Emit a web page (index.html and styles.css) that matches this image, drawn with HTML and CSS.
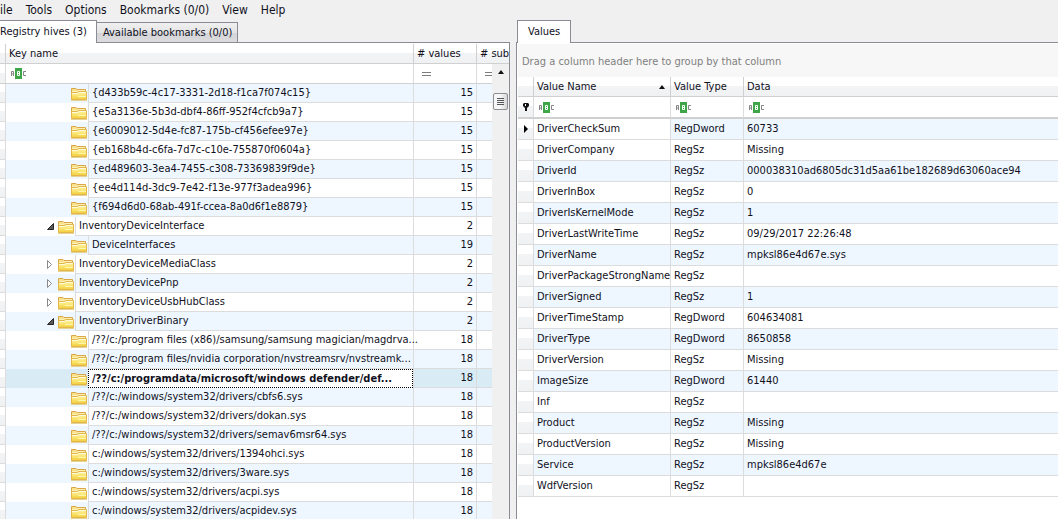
FILE: index.html
```html
<!DOCTYPE html>
<html lang="en">
  <head>
    <meta charset="UTF-8" />
    <meta name="viewport" content="width=device-width, initial-scale=1.0" />
    <title>Registry Explorer</title>
    <link rel="stylesheet" href="styles.css" />
  </head>
  <body>
    <!-- Menu bar -->
    <nav class="menu-bar">
      <button class="menu-item">ile</button>
      <button class="menu-item">Tools</button>
      <button class="menu-item">Options</button>
      <button class="menu-item">Bookmarks (0/0)</button>
      <button class="menu-item">View</button>
      <button class="menu-item">Help</button>
    </nav>

    <main class="workspace">
      <!-- Registry tree -->
      <section class="pane">
        <div class="tabs">
          <button class="tab active tab-flush">Registry hives (3)</button>
          <button class="tab">Available bookmarks (0/0)</button>
        </div>
        <div class="pane-body tree-body">
          <table class="grid tree">
            <colgroup>
              <col class="col-edge" />
              <col />
              <col class="col-values" />
              <col class="col-subkeys" />
            </colgroup>
            <thead>
              <tr>
                <th></th>
                <th>Key name</th>
                <th># values</th>
                <th># sub</th>
              </tr>
              <tr class="filter">
                <td></td>
                <td><svg class="abc"><use href="#icon-abc" /></svg></td>
                <td><svg class="equals"><use href="#icon-equals" /></svg></td>
                <td><svg class="equals"><use href="#icon-equals" /></svg></td>
              </tr>
            </thead>
            <tbody id="tree-rows"></tbody>
          </table>
          <div class="scrollbar">
            <span class="arrow-up"></span>
            <span class="thumb"><i></i><i></i><i></i><i></i></span>
          </div>
        </div>
      </section>

      <!-- Values of the selected key -->
      <section class="pane">
        <div class="tabs">
          <button class="tab active">Values</button>
        </div>
        <div class="pane-body values-body">
          <div class="group-panel">Drag a column header here to group by that column</div>
          <table class="grid values">
            <colgroup>
              <col class="col-indicator" />
              <col class="col-name" />
              <col class="col-type" />
              <col />
            </colgroup>
            <thead>
              <tr>
                <th></th>
                <th><div class="sorted">Value Name<span class="arrow-up"></span></div></th>
                <th>Value Type</th>
                <th>Data</th>
              </tr>
              <tr class="filter">
                <td class="indicator"><svg class="pin"><use href="#icon-pin" /></svg></td>
                <td><svg class="abc"><use href="#icon-abc" /></svg></td>
                <td><svg class="abc"><use href="#icon-abc" /></svg></td>
                <td><svg class="abc"><use href="#icon-abc" /></svg></td>
              </tr>
            </thead>
            <tbody id="value-rows"></tbody>
          </table>
        </div>
      </section>
    </main>

    <!-- Icons -->
    <svg class="icon-defs">
      <defs>
        <linearGradient id="folder-fill" x1="0" y1="0" x2="0" y2="1">
          <stop offset="0" stop-color="#fdf3a8" />
          <stop offset="0.5" stop-color="#fbe573" />
          <stop offset="1" stop-color="#f2cc3c" />
        </linearGradient>
        <symbol id="icon-folder" viewBox="0 0 16 14">
          <path d="M0.5 12V1.5H5L6 2.5H14.5V12Z" fill="#f9e08a" stroke="#d9a648" />
          <path d="M1 4.5H6L7 3.5H14" fill="none" stroke="#fdf0b4" />
          <path d="M0.5 5.5H6.5L7.5 4.5H15.5V12.5H0.5Z" fill="url(#folder-fill)" stroke="#e2b64a" />
          <path d="M1 6.5H7L8 5.5H15" fill="none" stroke="#fffbd8" />
          <path d="M7 9.5H15" fill="none" stroke="#fff6b0" />
          <path d="M0 13.5H16" stroke="#e6d294" />
        </symbol>
        <symbol id="icon-abc" viewBox="0 0 16 11">
          <rect x="4" y="0" width="7" height="11" fill="#3fa648" />
          <path d="M0.5 8V3.5H2.5V8M0.5 6H2.5" fill="none" stroke="#858585" />
          <path d="M6.5 3.5H8.5V7.5H6.5ZM6.5 5.5H8.5" fill="none" stroke="#fff" />
          <path d="M15 3.5H12.5V7.5H15" fill="none" stroke="#858585" />
        </symbol>
        <symbol id="icon-equals" viewBox="0 0 9 4">
          <path d="M0 0.5H9M0 3.5H9" stroke="#7c7c7c" />
        </symbol>
        <symbol id="icon-pin" viewBox="0 0 6 8">
          <path d="M1 0H5L6 1V3L4 5V8H2V5L0 3V1Z" fill="#111" />
          <rect x="2" y="1" width="1" height="2" fill="#fff" />
        </symbol>
        <symbol id="icon-current" viewBox="0 0 4 8">
          <path d="M0 0L4 4L0 8Z" fill="#000" />
        </symbol>
        <symbol id="icon-open" viewBox="0 0 7 7">
          <path d="M6.5 0.5V6.5H0.5Z" fill="#595959" stroke="#262626" />
        </symbol>
        <symbol id="icon-closed" viewBox="0 0 6 9">
          <path d="M0.5 0.5V8.5L4.5 4.5Z" fill="#fff" stroke="#8a8a8a" />
        </symbol>
      </defs>
    </svg>

    <script src="script.js"></script>
  </body>
</html>
```
FILE: styles.css
```css
/* Global Styles */
* {
  box-sizing: border-box;
}

body {
  display: flex;
  flex-direction: column;
  height: 100vh;
  margin: 0;
  overflow: hidden;
  background-color: #f0f0f0;
  color: #10101c;
  font-family: "DejaVu Sans Condensed", "DejaVu Sans", sans-serif;
  font-size: 11px;
  line-height: 16px;
}

button {
  margin: 0;
  border: none;
  background: none;
  color: inherit;
  font: inherit;
}

.icon-defs {
  position: absolute;
  width: 0;
  height: 0;
}

/* Menu Bar */
.menu-bar {
  display: flex;
  gap: 13px;
  height: 20px;
  font-size: 12px;
}

.menu-item {
  padding: 0;
  line-height: 18px;
}

/* Workspace */
.workspace {
  display: grid;
  grid-template-columns: 510fr 542fr;
  gap: 6px;
  flex: 1;
  min-height: 0;
}

.pane {
  display: flex;
  flex-direction: column;
  min-width: 0;
  min-height: 0;
}

/* Tabs */
.tabs {
  display: flex;
  align-items: flex-end;
  height: 22px;
  padding-left: 1px;
}

.tab {
  height: 20px;
  padding: 0 5px 0 6px;
  border: 1px solid #898c95;
  border-left: none;
  border-bottom: none;
  background: linear-gradient(#f0f0f0, #e4e4e6 50%, #d4d4d8 50%, #dcdcdf);
}

.tab.active {
  height: 23px;
  margin-bottom: -1px;
  padding: 0 10px;
  border-left: 1px solid #898c95;
  background: #fff;
  z-index: 1;
}

.tab.tab-flush {
  margin-left: -1px;
  padding: 0 9px 0 0;
  border-left: none;
}

.pane-body {
  flex: 1;
  min-height: 0;
  overflow: hidden;
  border-top: 1px solid #898c95;
  background-color: #fff;
}

.tree-body {
  position: relative;
  padding-top: 1px;
  border-right: 1px solid #898c95;
}

.values-body {
  border-left: 1px solid #898c95;
  padding: 1px 0 0 1px;
}

/* Grids */
.grid {
  width: 100%;
  table-layout: fixed;
  border-collapse: separate;
  border-spacing: 0;
}

.grid th,
.grid td {
  height: 19px;
  padding: 0 3px;
  border-right: 1px solid #dcdcdc;
  border-bottom: 1px solid #dcdcdc;
  font-weight: normal;
  text-align: left;
  white-space: nowrap;
}

.grid th {
  height: 20px;
  border-color: #d0d0d0;
  background: linear-gradient(#fff 45%, #f3f4f6 45%, #f0f1f3);
}

.grid th:last-child,
.grid td:last-child {
  border-right: none;
}

.grid .filter td {
  height: 20px;
  border-bottom-color: #d0d0d0;
}

.grid tbody tr:nth-child(odd) {
  background-color: #eef7ff;
}

.grid td:first-child {
  background: linear-gradient(#fff 45%, #f3f4f6 45%, #f0f1f3);
}

.grid svg {
  display: block;
}

.abc {
  width: 16px;
  height: 11px;
  margin-left: 2px;
}

.equals {
  width: 9px;
  height: 4px;
  margin-left: 5px;
}

.arrow-up {
  width: 0;
  border: 3px solid transparent;
  border-top: none;
  border-bottom: 4px solid #111;
}

/* Registry Tree */
.col-edge {
  width: 6px;
}

.col-values {
  width: 63px;
}

.col-subkeys {
  width: 32px;
}

.tree th {
  padding: 0 0 0 3px;
}

.grid.tree td:first-child {
  padding: 0;
}

.tree td.key {
  padding: 0;
  border-bottom: none;
}

.key-cell {
  display: flex;
  align-items: center;
  height: 19px;
}

.toggle {
  display: flex;
  align-items: center;
  justify-content: center;
  width: 16px;
  height: 18px;
  margin-left: 36px;
  padding: 0;
}

.toggle .open {
  width: 7px;
  height: 7px;
}

.toggle .closed {
  width: 6px;
  height: 9px;
}

.folder {
  flex: none;
  width: 16px;
  height: 14px;
}

.child .folder {
  margin-left: 65px;
}

.key-name {
  flex: 1;
  min-width: 0;
  height: 19px;
  margin-left: 1px;
  padding-left: 3px;
  border-left: 1px solid #dcdcdc;
  border-bottom: 1px solid #dcdcdc;
  line-height: 18px;
}

.tree td.count {
  text-align: right;
}

.grid.tree tbody tr.selected {
  background-color: #d9ecf6;
}

.selected .key-name {
  border: 1px dotted #000;
  background-color: #fff;
  font-weight: bold;
  line-height: 17px;
}

/* Scrollbar */
.scrollbar {
  position: absolute;
  top: 21px;
  right: 0;
  bottom: 0;
  display: flex;
  flex-direction: column;
  align-items: center;
  gap: 19px;
  width: 17px;
  padding-top: 6px;
  background-color: #f0f0f0;
}

.thumb {
  display: flex;
  flex-direction: column;
  align-items: center;
  justify-content: center;
  gap: 1px;
  width: 15px;
  height: 17px;
  border: 1px solid #8e8e94;
  border-radius: 2px;
  background: linear-gradient(90deg, #f6f6f6 50%, #d6d6d8);
}

.thumb i {
  width: 7px;
  height: 1px;
  background-color: #55565c;
}

/* Values Grid */
.col-indicator {
  width: 16px;
}

.col-name {
  width: 137px;
}

.col-type {
  width: 73px;
}

.group-panel {
  height: 33px;
  padding: 10px 4px;
  background-color: #f7f7f7;
  color: #808080;
}

.values tbody td {
  height: 21px;
}

.grid.values .filter td {
  height: 22px;
  border-bottom-width: 2px;
}

.grid.values td:first-child {
  padding: 0 5px;
}

.values .current td:nth-child(2) {
  background-color: #fff;
}

.sorted {
  display: flex;
  align-items: center;
  justify-content: space-between;
  padding-right: 2px;
}

.pin {
  width: 6px;
  height: 8px;
}

.marker {
  width: 4px;
  height: 8px;
  margin-left: 1px;
}
```
FILE: script.js
```js
// Registry keys: parents carry an "open" flag, the rest are children
const keys = [
  { name: "{d433b59c-4c17-3331-2d18-f1ca7f074c15}", values: 15 },
  { name: "{e5a3136e-5b3d-dbf4-86ff-952f4cfcb9a7}", values: 15 },
  { name: "{e6009012-5d4e-fc87-175b-cf456efee97e}", values: 15 },
  { name: "{eb168b4d-c6fa-7d7c-c10e-755870f0604a}", values: 15 },
  { name: "{ed489603-3ea4-7455-c308-73369839f9de}", values: 15 },
  { name: "{ee4d114d-3dc9-7e42-f13e-977f3adea996}", values: 15 },
  { name: "{f694d6d0-68ab-491f-ccea-8a0d6f1e8879}", values: 15 },
  { name: "InventoryDeviceInterface", values: 2, open: true },
  { name: "DeviceInterfaces", values: 19 },
  { name: "InventoryDeviceMediaClass", values: 2, open: false },
  { name: "InventoryDevicePnp", values: 2, open: false },
  { name: "InventoryDeviceUsbHubClass", values: 2, open: false },
  { name: "InventoryDriverBinary", values: 2, open: true },
  { name: "/??/c:/program files (x86)/samsung/samsung magician/magdrva...", values: 18 },
  { name: "/??/c:/program files/nvidia corporation/nvstreamsrv/nvstreamk...", values: 18 },
  { name: "/??/c:/programdata/microsoft/windows defender/def...", values: 18, selected: true },
  { name: "/??/c:/windows/system32/drivers/cbfs6.sys", values: 18 },
  { name: "/??/c:/windows/system32/drivers/dokan.sys", values: 18 },
  { name: "/??/c:/windows/system32/drivers/semav6msr64.sys", values: 18 },
  { name: "c:/windows/system32/drivers/1394ohci.sys", values: 18 },
  { name: "c:/windows/system32/drivers/3ware.sys", values: 18 },
  { name: "c:/windows/system32/drivers/acpi.sys", values: 18 },
  { name: "c:/windows/system32/drivers/acpidev.sys", values: 18 },
];

const values = [
  ["DriverCheckSum", "RegDword", "60733"],
  ["DriverCompany", "RegSz", "Missing"],
  ["DriverId", "RegSz", "000038310ad6805dc31d5aa61be182689d63060ace94"],
  ["DriverInBox", "RegSz", "0"],
  ["DriverIsKernelMode", "RegSz", "1"],
  ["DriverLastWriteTime", "RegSz", "09/29/2017 22:26:48"],
  ["DriverName", "RegSz", "mpksl86e4d67e.sys"],
  ["DriverPackageStrongName", "RegSz", ""],
  ["DriverSigned", "RegSz", "1"],
  ["DriverTimeStamp", "RegDword", "604634081"],
  ["DriverType", "RegDword", "8650858"],
  ["DriverVersion", "RegSz", "Missing"],
  ["ImageSize", "RegDword", "61440"],
  ["Inf", "RegSz", ""],
  ["Product", "RegSz", "Missing"],
  ["ProductVersion", "RegSz", "Missing"],
  ["Service", "RegSz", "mpksl86e4d67e"],
  ["WdfVersion", "RegSz", ""],
];

function icon(name, className) {
  return `<svg class="${className}"><use href="#icon-${name}" /></svg>`;
}

// Build the tree rows
document.getElementById("tree-rows").innerHTML = keys
  .map((key) => {
    const isParent = key.open !== undefined;
    const state = key.open ? "open" : "closed";
    const toggle = isParent
      ? `<button class="toggle" aria-expanded="${key.open}">${icon(state, state)}</button>`
      : "";
    const rowClass = (isParent ? "parent" : "child") + (key.selected ? " selected" : "");
    return `<tr class="${rowClass}">
      <td></td>
      <td class="key"><div class="key-cell">${toggle}${icon("folder", "folder")}<span class="key-name">${key.name}</span></div></td>
      <td class="count">${key.values}</td>
      <td></td>
    </tr>`;
  })
  .join("");

// Build the value rows, the first one is the current row
document.getElementById("value-rows").innerHTML = values
  .map(
    ([name, type, data], index) => `<tr class="${index === 0 ? "current" : ""}">
      <td class="indicator">${index === 0 ? icon("current", "marker") : ""}</td>
      <td>${name}</td>
      <td>${type}</td>
      <td>${data}</td>
    </tr>`
  )
  .join("");
```
